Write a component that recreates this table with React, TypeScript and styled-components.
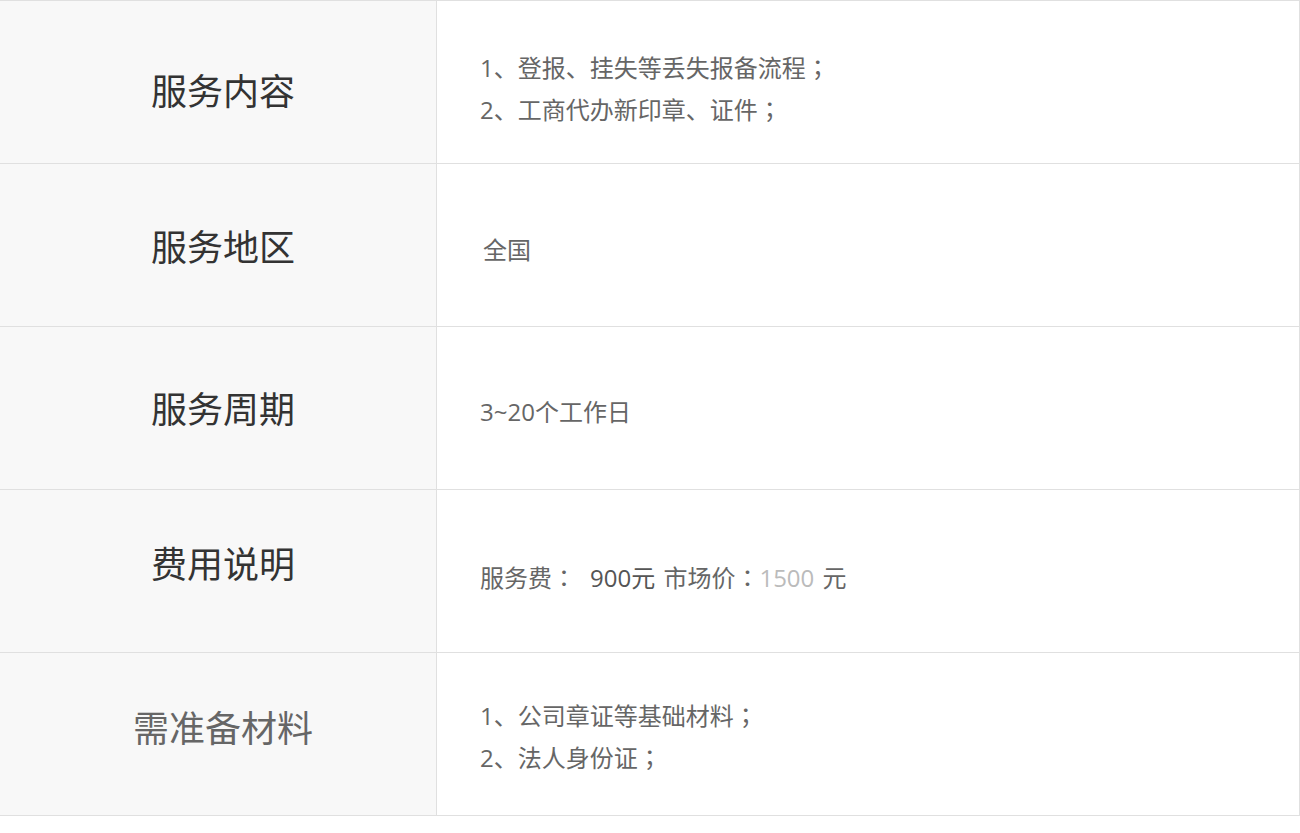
import React from 'react';
import styled, { createGlobalStyle } from 'styled-components';

const GlobalStyle = createGlobalStyle`
    body {
        margin: 0;
        background: #fff;
        font-family: "Noto Sans CJK SC", "Noto Sans", sans-serif;
    }
`;

interface Item {
    label: string;
    labelShift: number;
    valueShift: number;
    muted?: boolean;
    lines?: string[];
    price?: boolean;
    indent?: number;
}

const items: Item[] = [
    { label: '服务内容', labelShift: 7, valueShift: 6, lines: ['1、登报、挂失等丢失报备流程', '2、工商代办新印章、证件'] },
    { label: '服务地区', labelShift: 0, valueShift: 4.5, lines: ['全国'], indent: 3 },
    { label: '服务周期', labelShift: -1, valueShift: 3.5, lines: ['3~20个工作日'] },
    { label: '费用说明', labelShift: -9, valueShift: 6, price: true },
    { label: '需准备材料', labelShift: -8, valueShift: 2, muted: true, lines: ['1、公司章证等基础材料', '2、法人身份证'] },
];

export default function App() {
    return (
        <>
            <GlobalStyle />
            <Sheet>
                {items.map((item) => (
                    <Row key={item.label}>
                        <Label muted={item.muted} shift={item.labelShift}>{item.label}</Label>
                        <Value shift={item.valueShift} indent={item.indent || 0}>
                            {item.price ? (
                                <Line>
                                    服务费<Punct>：</Punct><Gap />
                                    <Strong>900元</Strong> 市场价<Punct>：</Punct><Faded>1500</Faded> 元
                                </Line>
                            ) : (
                                item.lines!.map((line) => (
                                    <Line key={line}>
                                        {line}
                                        {item.lines!.length > 1 && <Punct>；</Punct>}
                                    </Line>
                                ))
                            )}
                        </Value>
                    </Row>
                ))}
            </Sheet>
        </>
    );
}

const Sheet = styled.div`
    width: 1300px;
    box-sizing: border-box;
    border-top: 1px solid #e0e0e0;
    border-right: 1px solid #e0e0e0;
`;

const Row = styled.div`
    display: grid;
    grid-template-columns: 437px 1fr;
    height: 163px;
    box-sizing: border-box;
    border-bottom: 1px solid #e0e0e0;
`;

const Label = styled.div<{ muted?: boolean; shift: number }>`
    display: flex;
    align-items: center;
    justify-content: center;
    box-sizing: border-box;
    background: #f8f8f8;
    border-right: 1px solid #e0e0e0;
    padding-left: 10px;
    padding-top: ${(p) => Math.max(p.shift, 0) * 2}px;
    padding-bottom: ${(p) => Math.max(-p.shift, 0) * 2}px;
    font-size: 36px;
    color: ${(p) => (p.muted ? '#666' : '#333')};
`;

const Value = styled.div<{ shift: number; indent: number }>`
    display: flex;
    flex-direction: column;
    justify-content: center;
    box-sizing: border-box;
    padding-left: ${(p) => 43 + p.indent}px;
    padding-top: ${(p) => p.shift * 2}px;
    font-family: "Open Sans", "Noto Sans CJK SC", sans-serif;
    font-size: 24px;
    line-height: 41px;
    color: #666;
`;

const Line = styled.div`
    white-space: pre;
`;

const Punct = styled.span`
    font-family: "Noto Sans CJK TC", sans-serif;
`;

const Gap = styled.span`
    display: inline-block;
    width: 14px;
`;

const Strong = styled.span`
    color: #555;
    margin-right: 2px;
`;

const Faded = styled.span`
    color: #bbb;
    margin-right: 2px;
`;
